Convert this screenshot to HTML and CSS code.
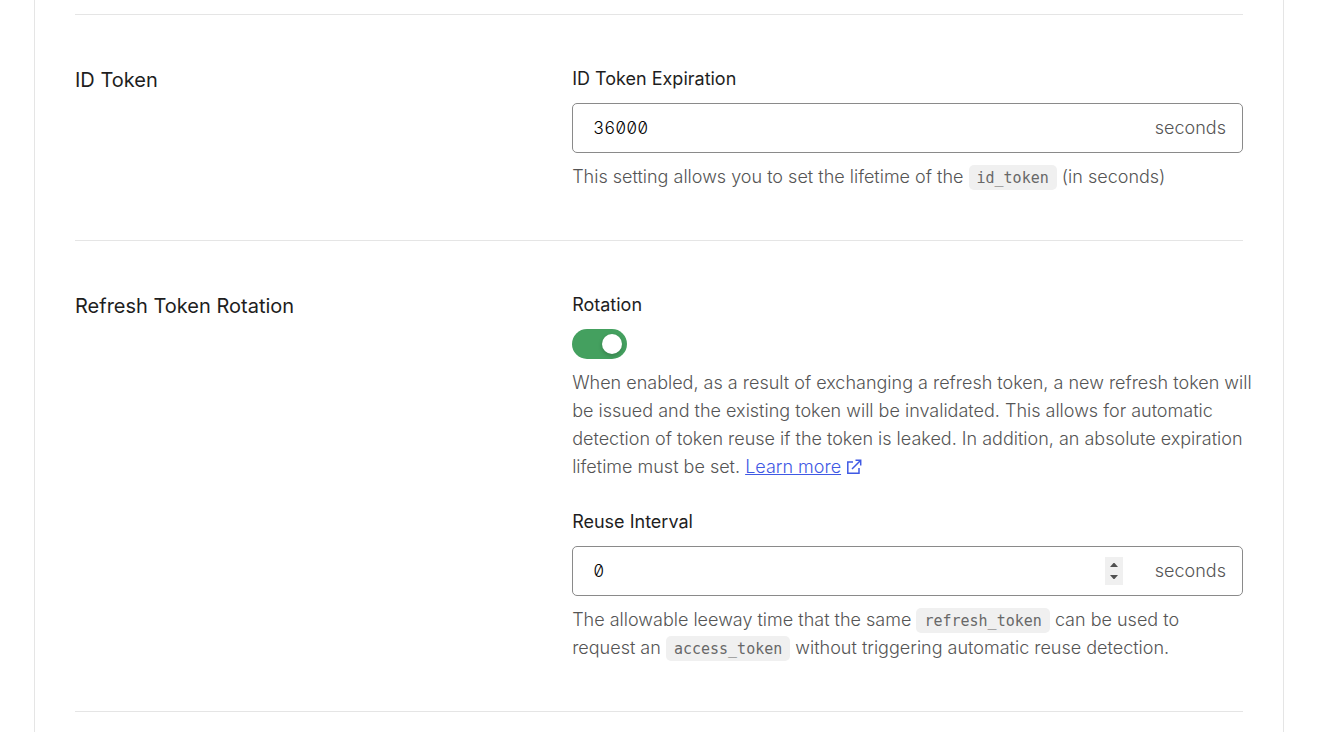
FILE: index.html
```html
<!DOCTYPE html>
<html lang="en">
<head>
<meta charset="utf-8">
<title>Application Settings</title>
<link rel="stylesheet" href="styles.css">
</head>
<body>
<main class="panel">
  <section class="section">
    <h2 class="section-title">ID Token</h2>
    <div class="fields">
      <div class="field">
        <label class="label" for="id-exp">ID Token Expiration</label>
        <div class="input-box">
          <input class="input" id="id-exp" type="text" inputmode="numeric" value="36000">
          <span class="unit">seconds</span>
        </div>
        <p class="help">This setting allows you to set the lifetime of the <code class="code">id_token</code> (in seconds)</p>
      </div>
    </div>
  </section>
  <section class="section">
    <h2 class="section-title">Refresh Token Rotation</h2>
    <div class="fields">
      <div class="field">
        <label class="label" for="rotation">Rotation</label>
        <input class="switch" id="rotation" type="checkbox" role="switch" checked>
        <p class="help help-wide">When enabled, as a result of exchanging a refresh token, a new refresh token will be issued and the existing token will be invalidated. This allows for automatic detection of token reuse if the token is leaked. In addition, an absolute expiration lifetime must be set. <a class="link" href="#"><span class="link-text">Learn more</span><svg class="link-icon" width="16" height="16" viewBox="0 0 16 16" fill="none" stroke="currentColor" stroke-width="1.5" aria-hidden="true"><path d="M7 3H1.8v11.2H13V9M9.5 1.3h5.2v5.2M14.5 1.5 6 10"/></svg></a></p>
      </div>
      <div class="field">
        <label class="label" for="reuse">Reuse Interval</label>
        <div class="input-box">
          <input class="input" id="reuse" type="number" value="0">
          <span class="unit">seconds</span>
        </div>
        <p class="help">The allowable leeway time that the same <code class="code">refresh_token</code> can be used to request an <code class="code">access_token</code> without triggering automatic reuse detection.</p>
      </div>
    </div>
  </section>
</main>
</body>
</html>
```
FILE: styles.css
```css
* {
  box-sizing: border-box;
}

body {
  margin: 0;
  background: #fff;
  color: #1e1e1e;
  font: 400 18px/28px Inter, "Liberation Sans", sans-serif;
}

.panel {
  min-height: 100vh;
  margin: 0 60px 0 34px;
  padding: 14px 40px 0;
  border: solid #e5e5e5;
  border-width: 0 1px;
}

.section {
  display: grid;
  grid-template-columns: 5fr 7fr;
  column-gap: 18px;
  padding: 50px 0 49px;
  border-top: 1px solid #e5e5e5;
}

.section:last-child {
  border-bottom: 1px solid #e5e5e5;
}

.section-title {
  margin: 0;
  font-size: 20px;
  font-weight: 400;
  line-height: 30px;
}

.fields {
  display: flex;
  flex-direction: column;
  gap: 27px;
}

.field {
  display: flex;
  flex-direction: column;
  align-items: stretch;
  gap: 10px;
}

.label {
  align-self: flex-start;
}

.input-box {
  display: flex;
  align-items: center;
  height: 50px;
  padding: 0 16px 0 20px;
  border: 1px solid #8a8a8a;
  border-radius: 5px;
}

.input {
  flex: 1;
  min-width: 0;
  margin: 0 32px 0 0;
  padding: 0;
  border: 0;
  outline: 0;
  background: none;
  color: #000;
  font: inherit;
  font-size: 17px;
  font-weight: 300;
  font-feature-settings: "tnum", "zero";
}

.input::-webkit-inner-spin-button {
  appearance: none;
  width: 18px;
  height: 28px;
  opacity: 1;
  background: #f0f0f0 url("data:image/svg+xml,%3Csvg xmlns='http://www.w3.org/2000/svg' width='18' height='28'%3E%3Cpath fill='%23505050' d='M5 10h8L9.500 6h-1zM5 18h8l-3.500 4h-1z'/%3E%3C/svg%3E") center no-repeat;
}

.unit,
.help {
  color: #555;
  font-weight: 300;
}

.help {
  margin: 0;
}

.help-wide {
  margin-right: -12px;
}

.code {
  padding: 4px 8px 3px;
  border-radius: 5px;
  background: #f0f0f0;
  color: #686868;
  font: 15px "DejaVu Sans Mono", monospace;
}

.switch {
  appearance: none;
  display: flex;
  justify-content: flex-end;
  align-items: center;
  align-self: flex-start;
  width: 55px;
  height: 30px;
  margin: 0;
  padding: 5px;
  border-radius: 15px;
  background: #44a05f;
}

.switch::before {
  content: "";
  width: 20px;
  height: 20px;
  border-radius: 50%;
  background: #fff;
  box-shadow: 0 2px 4px rgba(0, 0, 0, 0.2);
}

.switch:not(:checked) {
  justify-content: flex-start;
  background: #8a8a8a;
}

.link {
  color: #3f59e4;
  text-decoration: none;
}

.link-text {
  text-decoration: underline;
}

.link-icon {
  margin-left: 5px;
  vertical-align: -2px;
}
```
